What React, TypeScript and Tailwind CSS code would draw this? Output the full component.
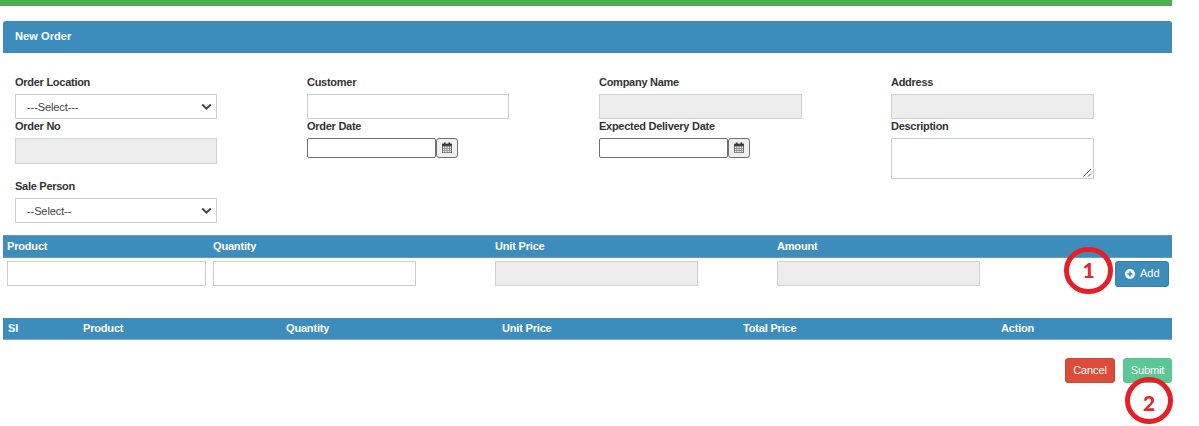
import React from "react";

const box = "block border border-[#cbcfd4] bg-white";
const disabledBox = "block border border-[#d0d1d3] bg-[#ededed]";

function Label({ children }: { children: React.ReactNode }) {
  return (
    <div className="h-4 text-[11px] leading-4 font-bold tracking-[-0.27px] whitespace-nowrap text-[#333]">
      {children}
    </div>
  );
}

function Select({ text }: { text: string }) {
  return (
    <div className={`${box} flex h-[25px] w-[202px] items-center justify-between pr-1 pl-[11px]`}>
      <span className="pt-px text-[11px] leading-none tracking-[-0.1px] text-[#444]">{text}</span>
      <svg width="11" height="8" viewBox="0 0 11 8" fill="none">
        <path d="M1.2 1.5 L5.5 5.7 L9.8 1.5" stroke="#444" strokeWidth="2" />
      </svg>
    </div>
  );
}

function DateField() {
  return (
    <div className="flex h-5">
      <input className="h-5 w-[129px] rounded-[2px] border border-[#6f6f6f] bg-white" />
      <button className="flex h-5 w-[22px] items-center justify-center rounded-[3px] border border-[#6f6f6f] bg-[#efefef]">
        <svg width="10" height="11" viewBox="0 0 11 12" className="-mt-0.5">
          <path d="M0 2h11v10H0z" fill="#666" />
          <path d="M0 2h11v2H0zM2 0.5h2v3H2zM7 0.5h2v3H7z" fill="#3a3a3a" />
          <path
            d="M1 4.8h1.7v1.8H1zM3.4 4.8h1.8v1.8H3.4zM5.9 4.8h1.8v1.8H5.9zM8.4 4.8H10v1.8H8.4zM1 7.2h1.7V9H1zM3.4 7.2h1.8V9H3.4zM5.9 7.2h1.8V9H5.9zM8.4 7.2H10V9H8.4zM1 9.6h1.7v1.5H1zM3.4 9.6h1.8v1.5H3.4zM5.9 9.6h1.8v1.5H5.9zM8.4 9.6H10v1.5H8.4z"
            fill="#efefef"
          />
        </svg>
      </button>
    </div>
  );
}

function Marker({ n, place }: { n: number; place: string }) {
  return (
    <div
      className={`absolute flex items-center justify-center rounded-full border-[5px] border-[#e61e25] font-[Lato,sans-serif] text-[21px] leading-none font-black text-[#dc2a2f] ${place}`}
    >
      {n}
    </div>
  );
}

export default function App() {
  return (
    <div className="h-[426px] w-[1199px] overflow-hidden bg-white font-['Liberation_Sans',Arial,sans-serif]">
      <div className="h-1.5 w-[1172px] bg-[#4caf50]" />
      <main className="mt-[15px] ml-[3px] w-[1169px]">
        <h1 className="flex h-8 items-center rounded-t-[3px] bg-[#3c8dbc] pb-0.5 pl-3 text-[11px] font-bold tracking-[0.08px] text-white">
          New Order
        </h1>

        <form className="grid grid-cols-[292px_292px_292px_1fr] pt-[21px] pl-3">
          <div className="flex flex-col">
            <Label>Order Location</Label>
            <div className="h-1" />
            <Select text="---Select---" />
            <div className="mt-[-1px] mb-[4px]">
              <Label>Order No</Label>
            </div>
            <input disabled className={`${disabledBox} h-[26px] w-[202px]`} />
            <div className="mt-[14px] mb-1">
              <Label>Sale Person</Label>
            </div>
            <Select text="--Select--" />
          </div>
          <div className="flex flex-col">
            <Label>Customer</Label>
            <input className={`${box} mt-1 h-[25px] w-[202px]`} />
            <div className="mt-[-1px] mb-[4px]">
              <Label>Order Date</Label>
            </div>
            <DateField />
          </div>
          <div className="flex flex-col">
            <Label>Company Name</Label>
            <input disabled className={`${disabledBox} mt-1 h-[25px] w-[203px]`} />
            <div className="mt-[-1px] mb-[4px]">
              <Label>Expected Delivery Date</Label>
            </div>
            <DateField />
          </div>
          <div className="flex flex-col">
            <Label>Address</Label>
            <input disabled className={`${disabledBox} mt-1 h-[25px] w-[203px]`} />
            <div className="mt-[-1px] mb-[4px]">
              <Label>Description</Label>
            </div>
            <div className={`${box} flex h-[41px] w-[203px] items-end justify-end p-px`}>
              <svg width="9" height="9" viewBox="0 0 9 9" stroke="#555" strokeWidth="1">
                <path d="M0.5 8.5L8 1M5 8.5L8 5.5" />
              </svg>
            </div>
          </div>
        </form>

        <section className="mt-3">
          <div className="grid h-[23px] grid-cols-[206px_282px_282px_1fr] items-center border-y border-[#6a9bb8] bg-[#3c8dbc] pl-1 text-[11px] font-bold tracking-[-0.18px] text-white">
            <span>Product</span>
            <span>Quantity</span>
            <span>Unit Price</span>
            <span>Amount</span>
          </div>
          <div className="grid grid-cols-[206px_282px_282px_338px_54px] pt-[3px] pl-1">
            <input className={`${box} h-[25px] w-[199px]`} />
            <input className={`${box} h-[25px] w-[203px]`} />
            <input disabled className={`${disabledBox} h-[25px] w-[203px]`} />
            <input disabled className={`${disabledBox} h-[25px] w-[203px]`} />
            <button className="flex h-[26px] w-[54px] items-center rounded-[3px] border border-[#367fa9] bg-[#3c8dbc] pb-px pl-[9px] text-[11px] text-white">
              <svg width="10" height="10" viewBox="0 0 10 10" className="mr-[5px]">
                <circle cx="5" cy="5" r="5" fill="#fff" />
                <path d="M5 2.3v5.4M2.3 5h5.4" stroke="#3c8dbc" strokeWidth="1.6" />
              </svg>
              Add
            </button>
          </div>
        </section>

        <section className="mt-[31px] grid h-[22px] grid-cols-[75px_203px_216px_241px_258px_1fr] items-center border-b border-[#79aecd] bg-[#3c8dbc] pl-[5px] text-[11px] font-bold tracking-[-0.18px] text-white">
          <span>Sl</span>
          <span>Product</span>
          <span>Quantity</span>
          <span>Unit Price</span>
          <span>Total Price</span>
          <span>Action</span>
        </section>

        <div className="mt-[18px] flex justify-end gap-2 text-[11px] tracking-[-0.1px] text-white">
          <button className="h-[25px] w-[50px] rounded-[3px] border border-[#cf4332] bg-[#dd4b39]">Cancel</button>
          <button className="h-[25px] w-[49px] rounded-[3px] border border-[#58c593] bg-[#5bc795]">Submit</button>
        </div>
      </main>
      <Marker n={1} place="top-[247px] left-[1064px] h-[47px] w-[49px] pb-[3px]" />
      <Marker n={2} place="top-[377px] left-[1125px] h-[47px] w-[48px] pt-[3px]" />
    </div>
  );
}
